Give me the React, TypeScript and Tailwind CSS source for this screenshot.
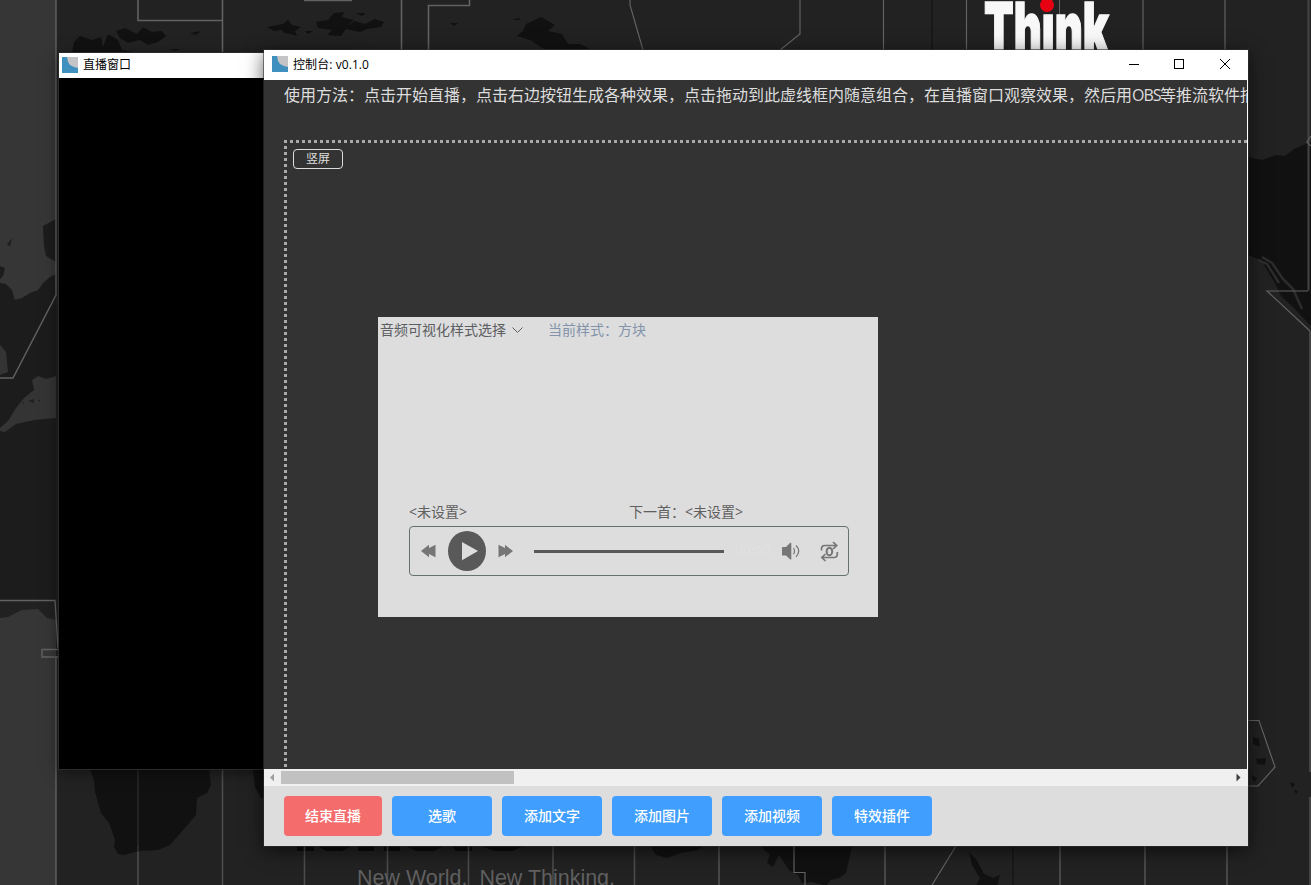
import React from "react";

function Wallpaper() {
  const line = { fill: "none", stroke: "#626262", strokeWidth: 1.6 };
  return (
    <svg className="absolute inset-0" width="1311" height="885" viewBox="0 0 1311 885">
      <rect width="1311" height="885" fill="#222222" />
      <g>
        <rect width="56" height="885" fill="#363636" />
        <path d="M56 274L50 277L44 282L38 290L30 293L22 298L14 300L6 306L0 302V600H56Z" fill="#1c1c1c" />
        <path d="M0 283L6 284L12 290L15 301L24 308L22 318L10 321L0 321ZM0 266L5 268L3 276L0 279ZM7 245L12 238L10 246ZM43 226L56 219V262L46 256L44 246Z" fill="#1c1c1c" />
        <path d="M0 345L6 352L8 372L0 375ZM0 428L8 421L16 408L24 398L34 390L32 380L38 376L46 379L56 376V418L34 420L16 424L5 432L0 431Z" fill="#343434" />
        <path d="M0 600H56V620L47 618L38 609L22 610L8 617L0 618Z" fill="#212121" />
        <path d="M28 401l6-2v4z M22 402h2v2z M38 400h2v2z" fill="#202020" />
      </g>
      <g fill="#111111">
        <path d="M74 42L80 36L92 40L101 37L103 47L108 34L118 40L122 50L140 53H72Z" />
        <path d="M116 31L125 28L137 34L143 27L152 32L162 31L166 36L158 42L148 45L140 40L128 43L120 38Z" />
        <path d="M190 33l11-2-5 4zM170 49l10 0-5 2zM267 27l16-3 5-4 4 5 9 2-6 4 2 5-6-2-7-1-2-3-8 1zM316 22l12-2 6-7 10-1-2 5 12 3-8 6 9-5 10 3 10-5 9 3-3 5-14 2-7 3-14-3-5 7-14-1 5-5-14-2zM356 13l10 0-4 3zM305 31l8 0-5 3z" />
        <path d="M526 24L541 17L555 25L548 31L562 34L568 44L580 44L590 49H544L530 40L517 36L523 31ZM450 23l8 0-4 3zM512 20l7-2 1 2z" />
        <path d="M1248 157L1262 160L1276 155L1285 156L1294 149L1311 142V326L1294 308L1281 296L1275 283L1267 270L1261 260L1248 255Z" />
        <path d="M90 769L94 780L95 792L101 813L109 823L115 840L114 847L118 854L124 855L138 851L158 850L170 845L184 829L196 815L197 798L207 793L211 785L209 769Z" />
        <path d="M253 769l2 18 6 11h5v-29zM651 846h52l-5 4-17 3-14 5-11-3zM762 846h90l-6 27-7 5-8 2-5 6-14-4-10 1-4-8-9-5-10-15-6 12-6-4 3-9-5-3z" />
        <path d="M969 852l7 7 8 15 9 4 7-3-3 11H976l4-8-8-13zM1253 737l6 2 1 8-7-3zM1256 759l10-1-1 7-8-1zM1251 775l6 3-3 5zM1290 782l5 2-3 4zM1294 790l4 1-2 3z" />
      </g>
      <path d="M1262 257L1272 263L1283 279L1293 289L1302 309M1258 260l9 4 12 19" fill="none" stroke="#2c2c2c" strokeWidth="2.500" />
      <path d="M297 846H314V851H297ZM318 846H352L342 851H326ZM358 846H374V851H358ZM384 846H400V851H384ZM406 846H444L434 851H416ZM452 846H472V851H456ZM482 846H524L512 851H494Z" fill="#0c0c0c" />
      <g {...line}>
        <path d="M56 0V295L13 378H0M0 600.500H55L58 648M42 649.500H58M42 649V657H58M56 657V885" strokeWidth="1.400" />
        <path d="M138 0V20.500H222M222.500 0V52M401.500 0V50M428.500 50V5.500H469.500V0M304 .5H352" />
        <path d="M630 0V5L643 50M800 0V34L780 50M883.500 0V50M966.500 0V50M1143 0V50M1225 0V50" strokeWidth="1.200" />
        <path d="M1059.500 0V50" strokeWidth="1" />
        <path d="M1308.500 0V290.500M1310 331V772M1310 797V885" stroke="#444" strokeWidth="2" />
        <path d="M1308 291H1267L1310 331M1248 720.500H1259L1275 767L1258 786H1248M1311 136l-4 6 4 4" strokeWidth="1.200" />
        <path d="M138 846V885M304.500 846V885M387.500 846V885M468.500 846V885M553 846V885M634.500 846V885M222.500 769V885" stroke="#4c4c4c" />
        <path d="M138 770V852" stroke="#272727" />
        <path d="M719 846V885M794 846V872.500H805V885M885 846V885M956 846L932 885M1060 846V885M1145 846V885M1227 846V885" strokeWidth="1.200" />
        <path d="M932 0V50M1013 846V885" stroke="#181818" />
      </g>
      <text x="984" y="54" textLength="125" lengthAdjust="spacingAndGlyphs" fill="#f8f8f8" stroke="#f8f8f8" strokeWidth="1.500" className="font-['Inter'] text-[72px] font-black">Think</text>
      <rect x="1037" y="0" width="17" height="14" fill="#222" />
      <circle cx="1047" cy="5" r="7" fill="#e60012" />
      <text x="357" y="885" textLength="258" lengthAdjust="spacingAndGlyphs" fill="#606060" xmlSpace="preserve" className="font-['Liberation_Sans'] text-[22px]">New World.&#160; New Thinking.</text>
    </svg>
  );
}

function AppIcon() {
  return (
    <svg width="16" height="16" viewBox="0 0 16 16" className="block shrink-0">
      <rect width="16" height="16" fill="#3f8fbf" />
      <path d="M5 0H16V11L12 10L8 8L6 5Z" fill="#c4c4c6" />
    </svg>
  );
}

function LiveWindow() {
  return (
    <section className="absolute left-[59px] top-[53px] flex h-[716px] w-[300px] flex-col bg-black shadow-[0_0_0_1px_#2b2b2b,0_3px_14px_rgba(0,0,0,0.5)]">
      <header className="flex h-[25px] shrink-0 items-start gap-[5px] bg-white pl-[3px] pt-1 text-xs text-black">
        <AppIcon />
        <span className="leading-4">直播窗口</span>
      </header>
    </section>
  );
}

function Player() {
  return (
    <div className="flex h-[50px] w-[440px] items-center rounded border border-[#65726f] text-[#767676]">
      <svg className="ml-[11px] shrink-0" width="15" height="14" viewBox="0 0 15 14" fill="currentColor">
        <path d="M0 7L8 .8V4L14.500 .8V13.200L8 10V13.200Z" />
      </svg>
      <svg className="ml-3 shrink-0" width="38" height="40" viewBox="0 0 38 40">
        <ellipse cx="19" cy="20" rx="19" ry="20" fill="#595959" />
        <path d="M14 11L30 20L14 29.200Z" fill="#dedede" />
      </svg>
      <svg className="ml-3 shrink-0" width="15" height="14" viewBox="0 0 15 14" fill="currentColor">
        <path d="M15 7L7 .8V4L.5 .8V13.200L7 10V13.200Z" />
      </svg>
      <div className="ml-[21px] h-[3px] w-[190px] shrink-0 bg-[#595959]" />
      <span className="ml-[11px] w-9 shrink-0 text-sm text-[#e1e1e1]">00:00</span>
      <svg className="ml-[11px] shrink-0" width="18" height="18" viewBox="0 0 18 18">
        <path d="M0 5.500Q0 5 1 5H4L8 1Q9.300 .2 9.300 1.500V17Q9.300 18 8 17.200L4 13.500H1Q0 13.500 0 13Z" fill="currentColor" />
        <path d="M11.500 6Q13.500 9 11.500 12.300M14 3.500Q19.500 9 14 14.800" fill="none" stroke="currentColor" strokeWidth="1.200" />
      </svg>
      <svg className="ml-5 shrink-0" width="19" height="21" viewBox="0 0 19 21" fill="none" stroke="currentColor" strokeWidth="1.700">
        <path d="M1.500 9.500V8Q1.500 4.500 5 4.500H16.500M13 1L16.700 4.500L13 8" />
        <path d="M17.300 11V13Q17.300 16.500 14 16.500H2M5.500 13L1.800 16.500L5.500 20" />
        <ellipse cx="9.400" cy="10.500" rx="2.800" ry="3.800" strokeWidth="2" />
      </svg>
    </div>
  );
}

function AudioPanel() {
  return (
    <div className="absolute left-[94px] top-[177px] flex h-[300px] w-[500px] flex-col bg-[#dddddd] text-sm leading-[26px] text-[#5c5e62]">
      <div className="flex items-center pl-[2px]">
        <span>音频可视化样式选择</span>
        <svg className="ml-[6px]" width="11" height="8" viewBox="0 0 11 8" fill="none" stroke="currentColor">
          <path d="M.5 1.500L5.500 6.500L10.500 1.500" />
        </svg>
        <span className="ml-[25px] text-[#8293ab]">当前样式：方块</span>
      </div>
      <div className="mt-auto mb-[41px] ml-[31px]">
        <div className="flex h-[27px] items-start text-[#606060] leading-[25px]">
          <span className="w-[220px]">&lt;未设置&gt;</span>
          <span>下一首：&lt;未设置&gt;</span>
        </div>
        <Player />
      </div>
    </div>
  );
}

const actions = ["选歌", "添加文字", "添加图片", "添加视频", "特效插件"];

function ControlWindow() {
  return (
    <section className="absolute left-[264px] top-[50px] flex h-[796px] w-[984px] flex-col bg-[#dddddd] shadow-[0_0_0_1px_rgba(50,50,50,0.6),0_4px_18px_rgba(0,0,0,0.65)]">
      <header className="flex h-[30px] shrink-0 items-center bg-white pl-2 text-xs text-black">
        <div className="-mt-[2px]"><AppIcon /></div>
        <span className="ml-[5px] leading-4 tracking-[0.08px]">控制台: v0.1.0</span>
        <svg className="mb-[2px] ml-auto mr-[17px]" width="102" height="12" viewBox="0 0 102 12" fill="none" stroke="#000">
          <path d="M0 6.500H10" />
          <rect x="45.500" y="1.500" width="9" height="9" />
          <path d="M91 1L101 11M101 1L91 11" />
        </svg>
      </header>
      <main className="h-[689px] shrink-0 overflow-hidden border-r border-white bg-[#333333] pl-5 text-[#dddddd]">
        <p className="h-[60px] whitespace-nowrap pt-[3px] text-base leading-6">
          使用方法：点击开始直播，点击右边按钮生成各种效果，点击拖动到此虚线框内随意组合，在直播窗口观察效果，然后用<span className="inline-block w-7 tracking-[-1px]">OBS</span>等推流软件捕获
        </p>
        <div className="relative flex h-[629px] bg-[repeating-linear-gradient(90deg,#aaaaaa_0_3px,transparent_3px_6px),repeating-linear-gradient(180deg,#aaaaaa_0_3px,transparent_3px_6px)] bg-[length:100%_3px,3px_100%] bg-no-repeat">
          <button className="ml-[9px] mt-[9px] h-5 w-[50px] rounded border border-[#dddddd] text-xs leading-[18px]">竖屏</button>
          <AudioPanel />
        </div>
      </main>
      <div className="flex h-[17px] shrink-0 items-center bg-[#f0f0f0]">
        <svg width="17" height="17" viewBox="0 0 17 17"><path d="M6 8.500L10 4.500V12.500Z" fill="#a0a0a0" /></svg>
        <div className="h-[13px] w-[233px] bg-[#c1c1c1]" />
        <svg className="ml-auto mr-px" width="17" height="17" viewBox="0 0 17 17"><path d="M10.500 8.500L6.500 4.500V12.500Z" fill="#404040" /></svg>
      </div>
      <footer className="flex h-[60px] items-center gap-[10px] pl-5 text-sm font-medium text-white">
        <button className="h-10 w-[98px] rounded bg-[#f56c6c]">结束直播</button>
        {actions.map((label) => (
          <button key={label} className="h-10 w-[100px] rounded bg-[#409eff]">{label}</button>
        ))}
      </footer>
    </section>
  );
}

export default function App() {
  return (
    <div className="relative h-[885px] w-[1311px] overflow-hidden bg-[#222222] font-['Open_Sans','Noto_Sans_CJK_SC',sans-serif]">
      <Wallpaper />
      <LiveWindow />
      <ControlWindow />
    </div>
  );
}
